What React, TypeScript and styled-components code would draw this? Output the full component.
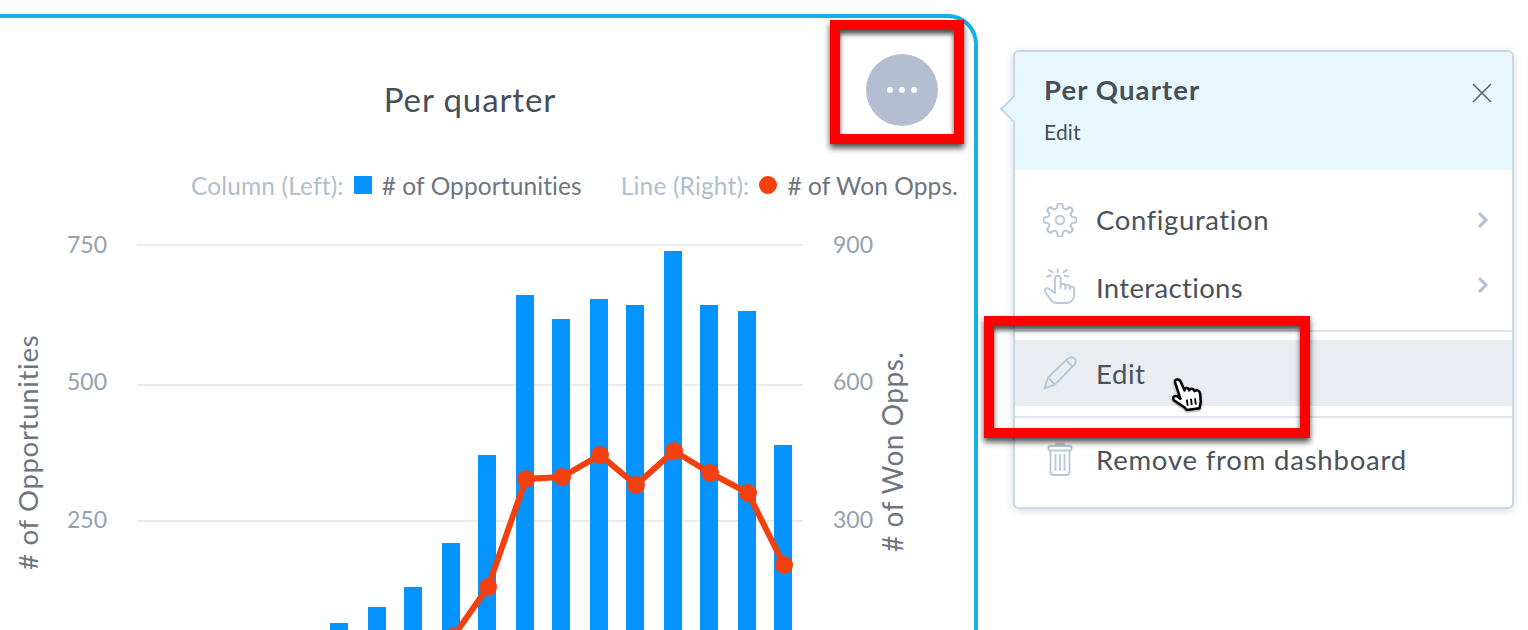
import React from 'react';
import styled, { createGlobalStyle } from 'styled-components';

const GlobalStyle = createGlobalStyle`
  html, body {
    margin: 0;
    height: 630px;
    overflow: hidden;
    background: #fff;
    font-family: Lato, "Open Sans", sans-serif;
    font-variant-ligatures: none;
  }
`;

const bars = [
  { x: 330, top: 623 },
  { x: 368, top: 607 },
  { x: 404, top: 587 },
  { x: 442, top: 543 },
  { x: 478, top: 455 },
  { x: 516, top: 295 },
  { x: 552, top: 319 },
  { x: 590, top: 299 },
  { x: 626, top: 305 },
  { x: 664, top: 251 },
  { x: 700, top: 305 },
  { x: 738, top: 311 },
  { x: 774, top: 445 },
];

const linePoints = [
  [453, 637],
  [488, 587],
  [526, 479],
  [562, 477],
  [600, 455],
  [636, 485],
  [674, 451],
  [710, 473],
  [748, 493],
  [784, 565],
];

const gridLines = [245, 385, 521];
const leftTicks = [
  { y: 245, label: '750' },
  { y: 382, label: '500' },
  { y: 520, label: '250' },
];
const rightTicks = [
  { y: 245, label: '900' },
  { y: 382, label: '600' },
  { y: 520, label: '300' },
];

// outline of a gear with rounded lobes, centred on 16,16
const gearPath = (() => {
  const teeth = 8;
  const cmds: string[] = [];
  for (let i = 0; i < teeth; i++) {
    const step = (Math.PI * 2) / teeth;
    const a = i * step - Math.PI / 2;
    const pt = (ang: number, r: number) =>
      `${(16 + Math.cos(ang) * r).toFixed(2)} ${(16 + Math.sin(ang) * r).toFixed(2)}`;
    const base = pt(a - step * 0.3, 11.6);
    const tip1 = pt(a - step * 0.2, 15);
    const tip2 = pt(a + step * 0.2, 15);
    const end = pt(a + step * 0.3, 11.6);
    const valley = pt(a + step * 0.5, 11);
    cmds.push(`${i === 0 ? 'M' : 'L'}${base} L${tip1} Q${pt(a, 16.4)} ${tip2} L${end} Q${valley} ${pt(a + step * 0.7, 11.6)}`);
  }
  return cmds.join(' ') + ' Z';
})();

const Stage = styled.div`
  display: flex;
  align-items: flex-start;
  width: 1528px;
  height: 630px;
  overflow: hidden;
`;

const Card = styled.section`
  position: relative;
  flex: none;
  box-sizing: border-box;
  width: 978px;
  height: 720px;
  margin-top: 14px;
  border-top: 4px solid #14b2e4;
  border-right: 4px solid #14b2e4;
  border-top-right-radius: 30px;
  background: #fff;
`;

const CardHeader = styled.header`
  display: flex;
  justify-content: center;
  padding: 61px 34px 0 0;
`;

const Title = styled.h2`
  margin: 0;
  font-size: 33px;
  line-height: 40px;
  font-weight: 400;
  letter-spacing: 0.9px;
  color: #464e56;
`;

const MenuButton = styled.button`
  position: absolute;
  top: 36px;
  left: 866px;
  display: flex;
  align-items: center;
  justify-content: center;
  gap: 6px;
  width: 72px;
  height: 72px;
  padding: 0;
  border: 0;
  border-radius: 50%;
  background: #b3bfd1;
`;

const Dot = styled.span`
  width: 6px;
  height: 6px;
  border-radius: 50%;
  background: #fff;
`;

const Legend = styled.div`
  display: flex;
  justify-content: flex-end;
  align-items: center;
  height: 32px;
  margin-top: 50px;
  padding-right: 16px;
  font-size: 24.5px;
`;

const LegendGroup = styled.div`
  display: flex;
  align-items: center;
  margin-left: 39px;
`;

const LegendCaption = styled.span`
  color: #afbfcd;
  margin-right: 10px;
  letter-spacing: 0.15px;
`;

const LegendSwatch = styled.span<{ $round?: boolean; $color: string }>`
  width: 18px;
  height: 18px;
  margin-right: 10px;
  background: ${(p) => p.$color};
  border-radius: ${(p) => (p.$round ? '50%' : '0')};
`;

const LegendName = styled.span`
  color: #6d7680;
  letter-spacing: 0.1px;
`;

const ChartSvg = styled.svg`
  display: block;
  margin-top: 29px;
  font-family: Lato, "Open Sans", sans-serif;
`;

const Popup = styled.aside`
  position: relative;
  flex: none;
  box-sizing: border-box;
  width: 501px;
  height: 459px;
  margin: 50px 0 0 35px;
  border: 2px solid #c9d8e4;
  border-radius: 6px;
  background: #fff;
  box-shadow: 0 2px 8px rgba(120, 140, 165, 0.3);
`;

const Pointer = styled.span`
  position: absolute;
  top: 47px;
  left: -11px;
  width: 18px;
  height: 18px;
  background: #e8f7fe;
  border-left: 2px solid #c9d8e4;
  border-bottom: 2px solid #c9d8e4;
  transform: rotate(45deg);
`;

const PopupHeader = styled.div`
  position: relative;
  box-sizing: border-box;
  height: 118px;
  padding: 20px 29px 0;
  background: #e8f7fe;
  border-radius: 4px 4px 0 0;
`;

const PopupTitle = styled.div`
  font-size: 27.5px;
  line-height: 36px;
  font-weight: 700;
  letter-spacing: 1.1px;
  color: #464e58;
`;

const PopupSubtitle = styled.div`
  margin-top: 11px;
  font-size: 21px;
  line-height: 26px;
  letter-spacing: 0.2px;
  color: #464e58;
`;

const CloseIcon = styled.svg`
  position: absolute;
  top: 31px;
  right: 20px;
`;

const MenuGroup = styled.div`
  padding: 16px 0 8px;
`;

const MenuRow = styled.div<{ $hovered?: boolean; $tall?: boolean }>`
  display: flex;
  align-items: center;
  height: ${(p) => (p.$tall ? 68 : 66)}px;
  padding: 0 23px 0 28px;
  background: ${(p) => (p.$hovered ? '#e9edf2' : 'transparent')};
`;

const IconSlot = styled.span`
  display: flex;
  align-items: center;
  justify-content: center;
  flex: none;
  width: 34px;
  margin-right: 19px;
`;

const MenuLabel = styled.span<{ $tracking?: number; $drop?: boolean }>`
  flex: 1;
  padding-top: ${(p) => (p.$drop ? 2 : 0)}px;
  font-size: 27.5px;
  line-height: 36px;
  letter-spacing: ${(p) => p.$tracking ?? 0.6}px;
  color: #4a525c;
`;

const Divider = styled.hr`
  height: 2px;
  margin: 0;
  border: 0;
  background: #dfe6ee;
`;

const HoverGroup = styled.div`
  padding: 8px 0 10px;
`;

const ChevronSvg = styled.svg<{ $lift?: boolean }>`
  transform: translateY(${(p) => (p.$lift ? -3 : 0)}px);
`;

const Callout = styled.div<{ $left: number; $top: number; $width: number; $height: number }>`
  position: absolute;
  left: ${(p) => p.$left}px;
  top: ${(p) => p.$top}px;
  width: ${(p) => p.$width}px;
  height: ${(p) => p.$height}px;
  box-sizing: border-box;
  border: 10px solid #fe0000;
  box-shadow: 0 4px 6px rgba(0, 0, 0, 0.7), inset 0 4px 5px rgba(0, 0, 0, 0.7);
  pointer-events: none;
`;

const Cursor = styled.svg`
  position: absolute;
  left: 1170px;
  top: 377px;
  filter: drop-shadow(0 1px 1px rgba(0, 0, 0, 0.45));
`;

const Chevron: React.FC<{ lift?: boolean }> = ({ lift }) => (
  <ChevronSvg $lift={lift} width="12" height="18" viewBox="0 0 12 18" fill="none">
    <path d="M2 2l7 7-7 7" stroke="#b3bfd1" strokeWidth="3" />
  </ChevronSvg>
);

const iconStroke = '#b9c8d8';

const GearIcon = () => (
  <svg width="34" height="34" viewBox="0 0 32 32" fill="none" stroke={iconStroke} strokeWidth="1.9">
    <path d={gearPath} strokeLinejoin="round" />
    <circle cx="16" cy="16" r="4" />
  </svg>
);

const TapSvg = styled.svg`
  margin-top: -4px;
`;

const TapIcon = () => (
  <TapSvg width="32" height="36" viewBox="0 0 32 36" fill="none" stroke={iconStroke} strokeWidth="1.9" strokeLinecap="round" strokeLinejoin="round">
    <path d="M11 24V10.500a2.800 2.800 0 0 1 5.600 0V20M16.600 17.500a2.500 2.500 0 0 1 4.800 0V21M21.400 18.500a2.300 2.300 0 0 1 4.500 0V21M25.900 20a2.200 2.200 0 0 1 4.200 0.600V27c0 4.500-3 8-7.500 8H13c-3 0-5-1-6.500-3.500L1.500 24c-1.600-2.400 1.300-5 3.500-3.200L11 25" />
    <path d="M13.800 1v3.500M5 2l3.600 2.200M23 2l-3.600 2.200M3 8.500l4-1M24.500 8.500l-4-1" />
  </TapSvg>
);

const PencilIcon = () => (
  <svg width="34" height="34" viewBox="0 0 34 34" fill="none" stroke={iconStroke} strokeWidth="1.9" strokeLinejoin="round">
    <path d="M1.500 32.500L5 21.500 25 2.500c2-2 5-1.500 6.500 0s1.500 4 0 6L12 28.500z" />
    <path d="M5 21.500l7 7M23.500 4.500l6.500 6.500" />
  </svg>
);

const TrashIcon = () => (
  <svg width="26" height="34" viewBox="0 0 26 34" fill="none" stroke={iconStroke} strokeWidth="1.9" strokeLinejoin="round">
    <path d="M9 4V2h8v2" />
    <rect x="1.500" y="4" width="23" height="4.500" rx="1.500" />
    <path d="M3.500 8.500V30a3 3 0 0 0 3 3h13a3 3 0 0 0 3-3V8.500" />
    <path d="M8.500 12v17M13 12v17M17.500 12v17" />
  </svg>
);

const App: React.FC = () => {
  const chartTop = 230;
  const linePath = linePoints.map(([x, y]) => `${x},${y - chartTop}`).join(' ');

  return (
    <>
      <GlobalStyle />
      <Stage>
        <Card>
          <CardHeader>
            <Title>Per quarter</Title>
          </CardHeader>
          <MenuButton>
            <Dot />
            <Dot />
            <Dot />
          </MenuButton>
          <Legend>
            <LegendGroup>
              <LegendCaption>Column (Left):</LegendCaption>
              <LegendSwatch $color="#0593ff" />
              <LegendName># of Opportunities</LegendName>
            </LegendGroup>
            <LegendGroup>
              <LegendCaption>Line (Right):</LegendCaption>
              <LegendSwatch $color="#f2400e" $round />
              <LegendName># of Won Opps.</LegendName>
            </LegendGroup>
          </Legend>
          <ChartSvg width="974" height="400" viewBox="0 0 974 400">
            {gridLines.map((y) => (
              <line key={y} x1="137" x2="803" y1={y - chartTop} y2={y - chartTop} stroke="#e9ebee" strokeWidth="2" />
            ))}
            {bars.map((b) => (
              <rect key={b.x} x={b.x} y={b.top - chartTop} width="18" height={640 - b.top} fill="#0593ff" />
            ))}
            <polyline points={linePath} fill="none" stroke="#f2400e" strokeWidth="6" />
            {linePoints.map(([x, y]) => (
              <circle key={x} cx={x} cy={y - chartTop} r="9" fill="#f2400e" />
            ))}
            {leftTicks.map((t) => (
              <text key={t.label} x="107" y={t.y - chartTop + 8} textAnchor="end" fontSize="23" fill="#94a2b0">
                {t.label}
              </text>
            ))}
            {rightTicks.map((t) => (
              <text key={t.label} x="833" y={t.y - chartTop + 8} fontSize="23" fill="#94a2b0">
                {t.label}
              </text>
            ))}
            <text
              transform={`translate(38 ${570 - chartTop}) rotate(-90)`}
              fontSize="27.500"
              letterSpacing="0.7"
              fill="#6d7680"
            >
              # of Opportunities
            </text>
            <text
              transform={`translate(903 ${552 - chartTop}) rotate(-90)`}
              fontSize="28"
              letterSpacing="0.5"
              fill="#6d7680"
            >
              # of Won Opps.
            </text>
          </ChartSvg>
        </Card>
        <Popup>
          <Pointer />
          <PopupHeader>
            <PopupTitle>Per Quarter</PopupTitle>
            <PopupSubtitle>Edit</PopupSubtitle>
            <CloseIcon width="20" height="20" viewBox="0 0 20 20" fill="none" stroke="#56636f" strokeWidth="1.5">
              <path d="M1 1l18 18M19 1L1 19" />
            </CloseIcon>
          </PopupHeader>
          <MenuGroup>
            <MenuRow $tall>
              <IconSlot>
                <GearIcon />
              </IconSlot>
              <MenuLabel>Configuration</MenuLabel>
              <Chevron />
            </MenuRow>
            <MenuRow $tall>
              <IconSlot>
                <TapIcon />
              </IconSlot>
              <MenuLabel $tracking={0.35}>Interactions</MenuLabel>
              <Chevron lift />
            </MenuRow>
          </MenuGroup>
          <Divider />
          <HoverGroup>
            <MenuRow $hovered>
              <IconSlot>
                <PencilIcon />
              </IconSlot>
              <MenuLabel $drop>Edit</MenuLabel>
            </MenuRow>
          </HoverGroup>
          <Divider />
          <HoverGroup>
            <MenuRow>
              <IconSlot>
                <TrashIcon />
              </IconSlot>
              <MenuLabel $drop $tracking={0.8}>Remove from dashboard</MenuLabel>
            </MenuRow>
          </HoverGroup>
        </Popup>
        <Callout $left={830} $top={20} $width={134} $height={124} />
        <Callout $left={984} $top={316} $width={326} $height={122} />
        <Cursor width="32" height="34" viewBox="0 0 31 33">
          <g transform="rotate(-8 15 16)">
            <path
              d="M6.500 4C6.500 .5 11 .5 12 4L14.500 13C15.500 10 18.500 10.500 19 13.500C20.500 11.500 23.500 12 24 15C25.500 13.500 29 14.500 29 18L28.500 26L26.500 32H14L12 29L3 21C1.500 18 4 16 6.500 17.500L9.500 20.500Z"
              fill="#fff"
              stroke="#000"
              strokeWidth="2.400"
              strokeLinejoin="round"
            />
            <path d="M15.500 22V28M19.500 22V28M23.500 22V28" stroke="#000" strokeWidth="1.800" />
          </g>
        </Cursor>
      </Stage>
    </>
  );
};

export default App;
